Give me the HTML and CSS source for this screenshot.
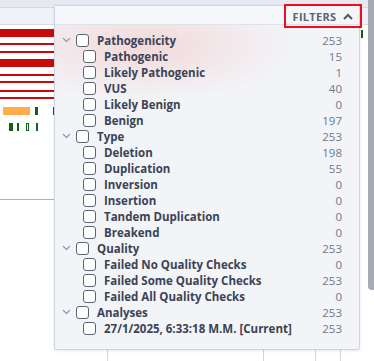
FILE: index.html
```html
<!DOCTYPE html>
<html lang="en">
<head>
  <meta charset="UTF-8" />
  <title>Filters</title>
  <link rel="stylesheet" href="styles.css">
</head>
<body>
  <div class="page">
    <div class="topbar"></div>
    <div class="subbar"></div>

    <div class="tracks">
      <div class="track thick"></div>
      <div class="track thin gap5"></div>
      <div class="track thin gap7"></div>
      <div class="track thick gap7"></div>
      <div class="track thin gap8"></div>
      <div class="track thin gap6"></div>
      <div class="track thin gap8"></div>
      <div class="track thin gap6"></div>
      <div class="marks">
        <span class="mark orange"></span>
        <span class="mark green"></span>
        <span class="mark green far"></span>
      </div>
      <div class="marks small">
        <span class="mark green w4 at9"></span>
        <span class="mark green w1 at17"></span>
        <span class="mark hollow at26"></span>
        <span class="mark green w2 at36"></span>
      </div>
      <div class="axis"></div>
    </div>

    <div class="vline grey at107"></div>
    <div class="vline grey at263"></div>
    <div class="vline pink at315"></div>
    <div class="vline grey at340"></div>
    <div class="side-mark"></div>
    <div class="scrollbar"></div>

    <div class="panel">
      <div class="panel-head"></div>
      <ul class="tree" id="tree"></ul>
    </div>

    <div class="filters-btn">
      <span>FILTERS</span>
      <svg width="10" height="7" viewBox="0 0 10 7"><path d="M1 6 L5 2 L9 6" fill="none" stroke="#4f5768" stroke-width="2"/></svg>
    </div>
  </div>

  <script>
    const groups = [
      { name: 'Pathogenicity', count: 253, items: [
        ['Pathogenic', 15], ['Likely Pathogenic', 1], ['VUS', 40], ['Likely Benign', 0], ['Benign', 197]
      ]},
      { name: 'Type', count: 253, items: [
        ['Deletion', 198], ['Duplication', 55], ['Inversion', 0], ['Insertion', 0], ['Tandem Duplication', 0], ['Breakend', 0]
      ]},
      { name: 'Quality', count: 253, items: [
        ['Failed No Quality Checks', 0], ['Failed Some Quality Checks', 253], ['Failed All Quality Checks', 0]
      ]},
      { name: 'Analyses', count: 253, items: [
        ['27/1/2025, 6:33:18 M.M. [Current]', 253]
      ]}
    ];

    const chevron = '<svg class="chev" width="9" height="6" viewBox="0 0 9 6"><path d="M1 1 L4.5 4.5 L8 1" fill="none" stroke="#9ba2ae" stroke-width="1.4"/></svg>';

    const tree = document.getElementById('tree');
    groups.forEach(g => {
      let html = `<li class="row parent">${chevron}<span class="box"></span><span class="label">${g.name}</span><span class="count">${g.count}</span></li>`;
      g.items.forEach(([name, count]) => {
        html += `<li class="row child"><span class="box"></span><span class="label">${name}</span><span class="count">${count}</span></li>`;
      });
      tree.insertAdjacentHTML('beforeend', html);
    });
  </script>
</body>
</html>
```

FILE: styles.css
```css
body {
  margin: 0;
  font-family: 'Open Sans', sans-serif;
  background: #ffffff;
}

.page {
  position: relative;
  width: 374px;
  height: 361px;
  overflow: hidden;
  background: #ffffff;
}

.topbar {
  height: 7px;
  background: #e6e9f1;
  border-bottom: 1px solid #d6dae3;
}

.subbar {
  height: 16px;
  background: #eef1f6;
  border-bottom: 1px solid #d6dae3;
}

.tracks {
  padding-top: 4px;
  width: 55px;
}

.track {
  background: #c80a0a;
}

.track.thick {
  height: 8px;
}

.track.thin {
  height: 2px;
}

.gap5 { margin-top: 6px; }
.gap6 { margin-top: 5px; }
.gap7 { margin-top: 6px; }
.gap8 { margin-top: 7px; }

.marks {
  position: relative;
  height: 8px;
  margin-top: 8px;
}

.marks.small {
  margin-top: 8px;
}

.mark {
  position: absolute;
  top: 0;
  height: 8px;
}

.mark.orange {
  left: 3px;
  width: 27px;
  background: #ffad47;
}

.mark.green {
  left: 35px;
  width: 3px;
  background: #12601e;
}

.mark.green.far {
  left: 53px;
}

.mark.w4 { width: 4px; }
.mark.w1 { width: 2px; }
.mark.w2 { width: 2px; }
.at9 { left: 9px !important; }
.at17 { left: 17px !important; }
.at26 { left: 26px !important; }
.at36 { left: 36px !important; }

.mark.hollow {
  width: 1px;
  height: 6px;
  border: 1px solid #12601e;
}

.axis {
  margin-top: 68px;
  height: 1px;
  background: #a9b0bf;
}

.vline {
  position: absolute;
  top: 24px;
  bottom: 0;
  width: 1px;
}

.vline.grey { background: #d2d6de; }
.vline.pink { background: #f6c9cc; }
.at107 { left: 107px; }
.at263 { left: 263px; }
.at315 { left: 315px; }
.at340 { left: 340px; }

.side-mark {
  position: absolute;
  left: 361px;
  top: 30px;
  width: 2px;
  height: 8px;
  background: #12601e;
}

.scrollbar {
  position: absolute;
  right: 0;
  top: 0;
  width: 6px;
  height: 290px;
  background: #a6abb5;
  border-radius: 0 0 0 4px;
}

.panel {
  position: absolute;
  left: 54px;
  top: 5px;
  width: 304px;
  height: 343px;
  border: 1px solid #cfd5e0;
  border-radius: 2px;
  background:
    radial-gradient(ellipse 150px 55px at 90px 40px, rgba(242, 210, 210, 0.8), rgba(242, 210, 210, 0) 100%),
    #f2f4f8;
  box-shadow: 0 1px 3px rgba(60, 70, 90, 0.12);
}

.panel-head {
  height: 18px;
  border-bottom: 1px solid #dfe2e9;
  background: #f4f6f9;
}

.tree {
  list-style: none;
  margin: 0;
  padding: 7px 17px 0 0;
}

.row {
  display: flex;
  align-items: center;
  height: 16px;
  font-size: 11.5px;
  color: #3b4354;
}

.row.parent {
  padding-left: 7px;
}

.row.child {
  padding-left: 28px;
}

.chev {
  width: 9px;
  margin-right: 5px;
}

.box {
  box-sizing: border-box;
  width: 13px;
  height: 13px;
  border: 1px solid #5d6472;
  border-radius: 3px;
  background: #ffffff;
  margin-right: 8px;
  flex-shrink: 0;
}

.label {
  flex: 1;
  font-weight: 700;
  white-space: nowrap;
}

.count {
  color: #717887;
  font-weight: 400;
}

.filters-btn {
  position: absolute;
  left: 284px;
  top: 4px;
  width: 78px;
  height: 24px;
  box-sizing: border-box;
  border: 2px solid #e8101c;
  display: flex;
  align-items: center;
  justify-content: center;
  gap: 7px;
  font-size: 11px;
  font-weight: 700;
  letter-spacing: 0.3px;
  color: #5b6374;
}
```
